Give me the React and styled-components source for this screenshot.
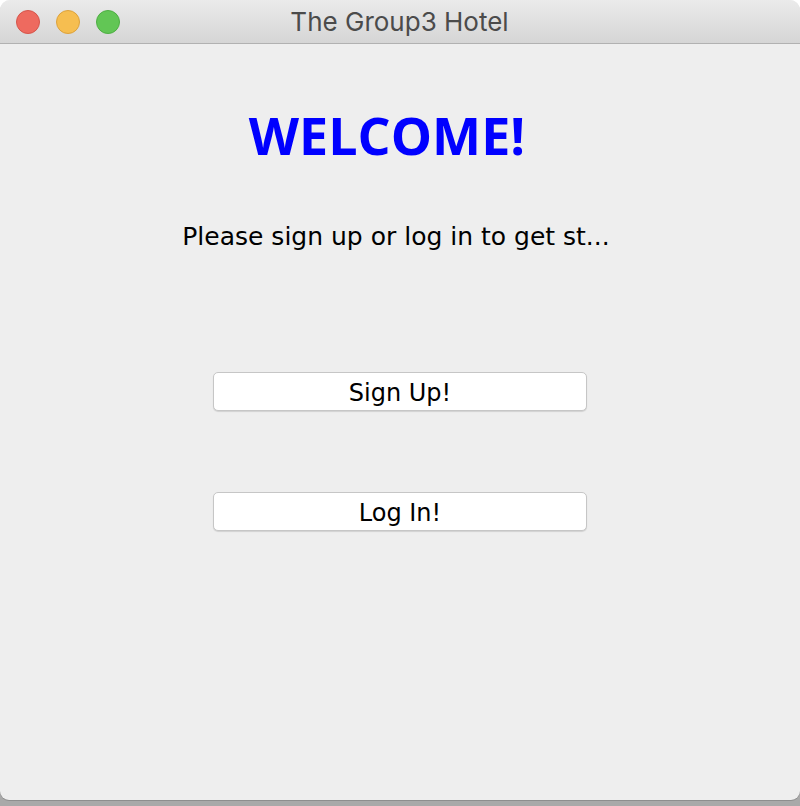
import styled, { createGlobalStyle } from "styled-components";

const GlobalStyle = createGlobalStyle`
  html, body {
    margin: 0;
    padding: 0;
    background: #ffffff;
  }
`;

const Desk = styled.div`
  width: 800px;
  height: 806px;
  background: linear-gradient(to bottom, #ffffff 0 50%, #a9a9a9 50%);
`;

const Window = styled.div`
  width: 800px;
  height: 800px;
  display: flex;
  flex-direction: column;
  border-radius: 10px 10px 9px 9px;
  overflow: hidden;
  background: #eeeeee;
  box-shadow: 0 1px 0 #8e8e8e;
`;

const TitleBar = styled.div`
  position: relative;
  height: 43px;
  flex-shrink: 0;
  display: flex;
  align-items: center;
  justify-content: center;
  background: linear-gradient(to bottom, #ebebeb, #d5d5d5);
  border-bottom: 1px solid #b1b1b1;
`;

const Lights = styled.div`
  position: absolute;
  left: 16px;
  top: 10px;
  display: flex;
  gap: 16px;
`;

const Light = styled.span`
  width: 22px;
  height: 22px;
  border-radius: 50%;
  background: ${(p) => p.$fill};
  border: 1px solid ${(p) => p.$edge};
`;

const Title = styled.div`
  font-family: Inter, "Liberation Sans", sans-serif;
  font-size: 26px;
  color: #4b4b4b;
  margin-left: -1px;
`;

const Content = styled.div`
  flex: 1;
  display: flex;
  flex-direction: column;
  align-items: center;
  font-family: "DejaVu Sans", "Open Sans", sans-serif;
`;

const Heading = styled.h1`
  margin: 56px 26px 0 0;
  font-family: "Open Sans", "DejaVu Sans", sans-serif;
  font-size: 52px;
  font-weight: 700;
  line-height: 70px;
  color: #0000ff;
`;

const Subtitle = styled.p`
  margin: 52px 0 0 -8px;
  font-size: 25px;
  line-height: 30px;
  color: #000000;
`;

const Button = styled.button`
  width: 374px;
  height: 39px;
  margin-top: ${(p) => p.$gap}px;
  padding: 2px 0 0;
  background: #ffffff;
  border: 1px solid #c6c6c6;
  border-radius: 5px;
  box-shadow: 0 1px 1px rgba(0, 0, 0, 0.12);
  font-family: "DejaVu Sans", "Open Sans", sans-serif;
  font-size: 24px;
  color: #000000;
  cursor: pointer;
`;

const App = () => {
  return (
    <Desk>
      <GlobalStyle />
      <Window>
        <TitleBar>
          <Lights>
            <Light $fill="#ee6a5f" $edge="#d5554b" />
            <Light $fill="#f6be50" $edge="#dca23c" />
            <Light $fill="#62c655" $edge="#4eae43" />
          </Lights>
          <Title>The Group3 Hotel</Title>
        </TitleBar>
        <Content>
          <Heading>WELCOME!</Heading>
          <Subtitle>Please sign up or log in to get st...</Subtitle>
          <Button $gap={120}>Sign Up!</Button>
          <Button $gap={81}>Log In!</Button>
        </Content>
      </Window>
    </Desk>
  );
};

export default App;
